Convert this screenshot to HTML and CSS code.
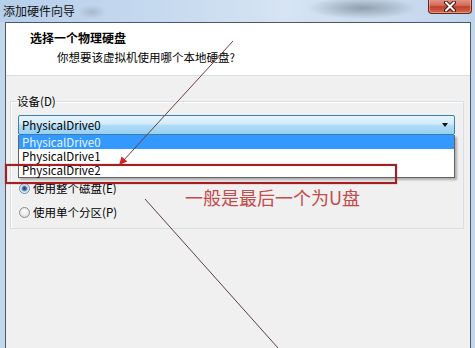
FILE: index.html
```html
<!DOCTYPE html>
<html lang="zh-CN">
<head>
    <meta charset="UTF-8">
    <meta name="viewport" content="width=device-width, initial-scale=1.0">
    <title>添加硬件向导</title>
    <link rel="stylesheet" href="styles.css">
</head>
<body>
    <div class="window">
        <div class="titlebar">
            <span class="title">添加硬件向导</span>
            <button class="close-btn">
                <svg width="14" height="11" viewBox="0 0 14 11">
                    <path d="M3 1.5 L11 9.5 M11 1.5 L3 9.5" stroke="#4a1410" stroke-width="4" stroke-linecap="round"/>
                    <path d="M3 1.5 L11 9.5 M11 1.5 L3 9.5" stroke="#ffffff" stroke-width="2" stroke-linecap="round"/>
                </svg>
            </button>
        </div>

        <div class="client">
            <div class="header">
                <div class="heading">选择一个物理硬盘</div>
                <div class="subheading">你想要该虚拟机使用哪个本地硬盘?</div>
            </div>

            <div class="content">
                <fieldset class="group">
                    <legend>设备(D)</legend>
                    <div class="combo">
                        <span class="combo-value">PhysicalDrive0</span>
                        <span class="combo-arrow"></span>
                        <ul class="dropdown">
                            <li class="selected">PhysicalDrive0</li>
                            <li>PhysicalDrive1</li>
                            <li>PhysicalDrive2</li>
                        </ul>
                    </div>
                    <label class="radio first"><span class="radio-dot checked"></span>使用整个磁盘(E)</label>
                    <label class="radio"><span class="radio-dot"></span>使用单个分区(P)</label>
                </fieldset>
            </div>
        </div>

        <!-- annotations drawn over the screenshot -->
        <div class="mark-box"></div>
        <div class="callout">一般是最后一个为U盘</div>
        <svg class="arrows" width="475" height="348" viewBox="0 0 475 348">
            <line x1="233" y1="41" x2="123" y2="161" stroke="#6e3c3c" stroke-width="1"/>
            <path d="M119 165 L121.6 156.4 L127.4 161.6 Z" fill="#d42222"/>
            <line x1="145" y1="199" x2="278" y2="348" stroke="#5e3f3f" stroke-width="1"/>
        </svg>
    </div>
</body>
</html>
```

FILE: styles.css
```css
body {
    margin: 0;
    padding: 0;
    overflow: hidden;
    font-family: "Noto Sans CJK SC", "Noto Sans", sans-serif;
    font-size: 11.5px;
    color: #000;
}

.window {
    position: relative;
    width: 475px;
    height: 348px;
    overflow: hidden;
    display: flex;
    flex-direction: column;
    background-color: #c2d6ec;
}

.titlebar {
    height: 22px;
    display: flex;
    align-items: flex-start;
    background:
        radial-gradient(ellipse 55px 11px at 362px 8px, rgba(95, 105, 120, 0.55), rgba(95, 105, 120, 0)),
        radial-gradient(ellipse 14px 7px at 92px 12px, rgba(120, 130, 145, 0.35), rgba(120, 130, 145, 0)),
        linear-gradient(90deg, #b6cfea 0%, #c9dcf0 40%, #d6e4f3 60%, #bfd4ec 100%);
}

.title {
    padding-left: 3px;
    line-height: 22px;
    font-size: 12px;
    color: #111;
}

.close-btn {
    margin-left: auto;
    margin-right: 3px;
    margin-top: -1px;
    width: 44px;
    height: 15px;
    padding: 0;
    display: flex;
    align-items: center;
    justify-content: center;
    border: 1px solid #6b2419;
    border-top: none;
    border-radius: 0 0 4px 4px;
    background: linear-gradient(#e59a8c 0%, #d46a59 45%, #c1402c 55%, #cf6a4e 100%);
    box-shadow: inset 0 0 0 1px rgba(255, 210, 200, 0.45);
}

.client {
    flex: 1;
    margin: 0 4px 0 5px;
    border: 1px solid #4b5866;
    border-bottom: none;
    display: flex;
    flex-direction: column;
    background-color: #f0f0f0;
}

.header {
    height: 53px;
    box-sizing: border-box;
    padding: 7px 0 0 24px;
    background-color: #fff;
    border-bottom: 1px solid #d5dfe5;
}

.heading {
    font-weight: bold;
    font-size: 12px;
    line-height: 16px;
}

.subheading {
    margin: 3px 0 0 27px;
    line-height: 16px;
}

.content {
    flex: 1;
    padding-top: 18px;
}

.group {
    margin: 0 6px 0 4px;
    padding: 7px 8px 8px 7px;
    border: 1px solid #d5dfe5;
    box-shadow: inset 1px 1px 0 #fff;
}

.group legend {
    padding: 0;
    margin-left: -1px;
    line-height: 14px;
}

.combo {
    position: relative;
    height: 20px;
    box-sizing: border-box;
    display: flex;
    align-items: center;
    padding-left: 3px;
    border: 1px solid #3c7fb1;
    border-radius: 2px;
    background: linear-gradient(#e6f4fc 0%, #d2ecfb 45%, #b2ddf7 50%, #98cff0 100%);
}

.combo-value {
    flex: 1;
    line-height: 18px;
}

.combo-arrow {
    width: 0;
    height: 0;
    margin-right: 6px;
    border-left: 3.5px solid transparent;
    border-right: 3.5px solid transparent;
    border-top: 4px solid #111;
}

.dropdown {
    position: absolute;
    top: 19px;
    left: -1px;
    width: 437px;
    margin: 0;
    padding: 0;
    list-style: none;
    box-sizing: border-box;
    background-color: #fff;
    border: 1px solid #646464;
    border-top: none;
    box-shadow: 2px 2px 2px rgba(0, 0, 0, 0.28);
    z-index: 2;
}

.dropdown li {
    height: 14px;
    line-height: 14px;
    padding-left: 3px;
}

.dropdown li.selected {
    background-color: #3399ff;
    color: #e8f6ff;
}

.radio {
    display: flex;
    align-items: center;
    height: 16px;
    margin-top: 8px;
}

.radio.first {
    margin-top: 45px;
}

.radio-dot {
    width: 11px;
    height: 11px;
    margin: 0 3px 0 1px;
    box-sizing: border-box;
    border-radius: 50%;
    border: 1px solid #8e8f8f;
    background: radial-gradient(circle at 50% 40%, #ffffff 0%, #e6e6e6 60%, #c9c9c9 100%);
}

.radio-dot.checked {
    border-color: #6d8aa5;
    background: radial-gradient(circle, #1f3e66 0%, #3a6fa8 30%, #a9c4df 45%, #f4f7fa 70%, #d8dde2 100%);
}

.mark-box {
    position: absolute;
    left: 5px;
    top: 164px;
    width: 392px;
    height: 20px;
    box-sizing: border-box;
    border: 2px solid #a21f24;
    box-shadow: 0 0 1px rgba(162, 31, 36, 0.7), inset 0 0 1px rgba(162, 31, 36, 0.5);
    z-index: 3;
}

.callout {
    position: absolute;
    left: 185px;
    top: 187px;
    font-size: 18px;
    line-height: 20px;
    color: #c24b4b;
    z-index: 3;
}

.arrows {
    position: absolute;
    left: 0;
    top: 0;
    z-index: 4;
}
```
